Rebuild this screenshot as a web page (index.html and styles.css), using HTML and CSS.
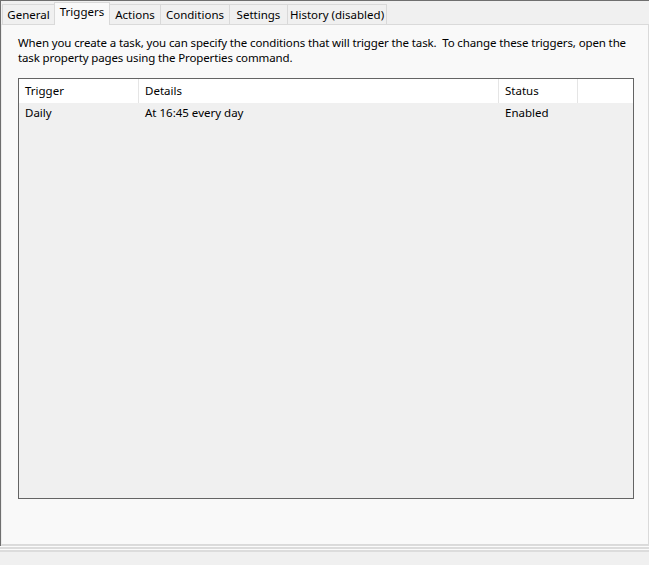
FILE: index.html
```html
<!DOCTYPE html>
<html>
<head>
<meta charset="utf-8">
<link rel="stylesheet" href="styles.css">
</head>
<body>
<div class="window">
  <div class="tabstrip">
    <div class="tab tab-general">General</div>
    <div class="tab tab-selected">Triggers</div>
    <div class="tab tab-actions">Actions</div>
    <div class="tab tab-conditions">Conditions</div>
    <div class="tab tab-settings">Settings</div>
    <div class="tab tab-history">History (disabled)</div>
  </div>
  <div class="panel">
    <p class="desc">When you create a task, you can specify the conditions that will trigger the task.&nbsp; To change these triggers, open the<br>task property pages using the Properties command.</p>
    <div class="listbox">
      <div class="row header">
        <div class="cell c1">Trigger</div>
        <div class="cell c2">Details</div>
        <div class="cell c3">Status</div>
        <div class="cell c4"></div>
      </div>
      <div class="row data">
        <div class="cell c1">Daily</div>
        <div class="cell c2">At 16:45 every day</div>
        <div class="cell c3">Enabled</div>
      </div>
    </div>
  </div>
  <div class="panel-shadow"></div>
</div>
<div class="stripes">
  <div class="stripe light"></div>
  <div class="stripe gray"></div>
  <div class="stripe light"></div>
  <div class="stripe gray"></div>
</div>
</body>
</html>
```
FILE: styles.css
```css
html, body {
  margin: 0;
  padding: 0;
}
body {
  background: #f0f0f0;
  font-family: "Noto Sans", "Segoe UI", sans-serif;
  font-size: 11.5px;
  color: #000;
  width: 649px;
  height: 565px;
  overflow: hidden;
}
.window {
  border-top: 1px solid #6f6f6f;
  border-left: 1px solid #6f6f6f;
  width: 648px;
}
.tabstrip {
  display: flex;
  align-items: flex-end;
  height: 23px;
  padding-left: 1px;
}
.tab {
  box-sizing: border-box;
  height: 20px;
  background: #f0f0f0;
  border-top: 1px solid #d9d9d9;
  border-right: 1px solid #d9d9d9;
  display: flex;
  align-items: center;
  justify-content: center;
  white-space: nowrap;
  line-height: 18px;
}
.tab-general {
  width: 52px;
  border-left: 1px solid #d9d9d9;
  border-right: none;
}
.tab-selected {
  width: 56px;
  height: 23px;
  margin-bottom: -1px;
  background: #f9f9f9;
  border-left: 1px solid #d9d9d9;
  position: relative;
  z-index: 1;
  align-items: flex-start;
  padding-top: 0;
}
.tab-actions { width: 51px; }
.tab-conditions { width: 69px; }
.tab-settings { width: 58px; }
.tab-history { width: 99px; }

.panel {
  box-sizing: border-box;
  height: 521px;
  background: #f9f9f9;
  border: 1px solid #dadada;
  border-left-color: #ececec;
  padding: 10px 14px 0 16px;
}
.panel-shadow {
  height: 1px;
  background: #dcdcdc;
}
.desc {
  margin: 0;
  line-height: 15px;
  letter-spacing: -0.13px;
  white-space: nowrap;
}
.listbox {
  box-sizing: border-box;
  margin-top: 13px;
  width: 616px;
  height: 421px;
  border: 1px solid #646464;
  background: #f0f0f0;
}
.row {
  display: flex;
}
.header {
  height: 24px;
  background: #fff;
}
.header .cell {
  line-height: 24px;
  border-right: 1px solid #e5e5e5;
}
.header .c4 {
  border-right: none;
  flex: 1;
}
.data .cell {
  line-height: 20px;
}
.cell {
  box-sizing: border-box;
  padding-left: 6px;
  white-space: nowrap;
}
.c1 { width: 120px; }
.c2 { width: 360px; }
.c3 { width: 79px; }

.stripes {
  display: flex;
  flex-direction: column;
}
.stripe.light {
  height: 1px;
  background: #fbfbfb;
}
.stripe.gray {
  height: 2px;
  background: #dcdcdc;
}
```
